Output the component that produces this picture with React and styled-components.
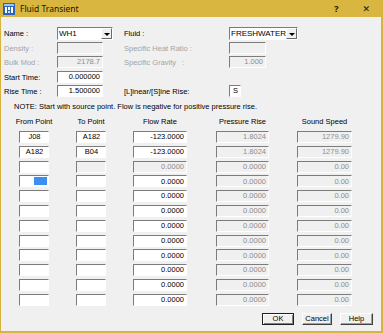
import React from "react";
import styled, { createGlobalStyle } from "styled-components";

const GlobalStyle = createGlobalStyle`
  html, body {
    margin: 0;
    padding: 0;
    background: #ffffff;
  }
  * {
    box-sizing: border-box;
  }
`;

const FONT = `"Liberation Sans", Arial, sans-serif`;

const rows = [
  { from: "J08", to: "A182", flow: "-123.0000", flowOn: true, pres: "1.8024", speed: "1279.90", fromOn: true, toOn: true },
  { from: "A182", to: "B04", flow: "-123.0000", flowOn: true, pres: "1.8024", speed: "1279.90", fromOn: true, toOn: true },
  { from: "", to: "", flow: "0.0000", flowOn: false, pres: "0.0000", speed: "0.00", fromOn: true, toOn: false },
  { from: "", to: "", flow: "0.0000", flowOn: true, pres: "0.0000", speed: "0.00", fromOn: true, toOn: true, caret: true },
];
for (let i = 0; i < 8; i++) {
  rows.push({ from: "", to: "", flow: "0.0000", flowOn: true, pres: "0.0000", speed: "0.00", fromOn: true, toOn: true });
}

function AppIcon() {
  return (
    <svg width="12" height="12" viewBox="0 0 12 12">
      <rect x="0" y="0" width="12" height="12" fill="#2a63b8" />
      <rect x="1" y="1" width="10" height="2" fill="#9cc3f0" />
      <rect x="2" y="4" width="2" height="6" fill="#ffffff" />
      <rect x="5" y="4" width="2" height="3" fill="#ffffff" />
      <rect x="8" y="4" width="2" height="6" fill="#ffffff" />
      <rect x="5" y="8" width="2" height="2" fill="#c8dcf5" />
    </svg>
  );
}

function Combo({ width, value }) {
  return (
    <ComboBox $w={width}>
      <ComboText>{value}</ComboText>
      <DropButton>
        <Arrow />
      </DropButton>
    </ComboBox>
  );
}

export default function App() {
  return (
    <>
      <GlobalStyle />
      <Window>
        <TitleBar>
          <TitleLeft>
            <AppIcon />
            <TitleText>Fluid Transient</TitleText>
          </TitleLeft>
          <TitleButtons>
            <TitleGlyph>?</TitleGlyph>
            <TitleGlyph $x>✕</TitleGlyph>
          </TitleButtons>
        </TitleBar>
        <Body>
          <Form>
            <Label>Name :</Label>
            <Cell>
              <Combo width={56} value="WH1" />
            </Cell>
            <Label>Fluid :</Label>
            <Cell>
              <Combo width={69} value="FRESHWATER" />
            </Cell>

            <Label $off>Density :</Label>
            <Cell>
              <Field $w={46} />
            </Cell>
            <Label $off>Specific Heat Ratio :</Label>
            <Cell>
              <Field $w={37} />
            </Cell>

            <Label $off>Bulk Mod :</Label>
            <Cell>
              <Field $w={46} $align="right">2178.7</Field>
            </Cell>
            <Label $off>Specific Gravity&nbsp;&nbsp;&nbsp;:</Label>
            <Cell>
              <Field $w={37} $align="right">1.000</Field>
            </Cell>

            <Label>Start Time:</Label>
            <Cell>
              <Field $w={46} $on $align="right">0.000000</Field>
            </Cell>
            <Label />
            <Cell />

            <Label>Rise Time :</Label>
            <Cell>
              <Field $w={46} $on $align="right">1.500000</Field>
            </Cell>
            <Label>[L]inear/[S]ine Rise:</Label>
            <Cell>
              <Field $w={12} $on $align="left">S</Field>
            </Cell>
          </Form>

          <Note>NOTE: Start with source point. Flow is negative for positive pressure rise.</Note>

          <Table>
            <Head $w={30}>From Point</Head>
            <Head $w={30}>To Point</Head>
            <Head $w={54}>Flow Rate</Head>
            <Head $w={53}>Pressure Rise</Head>
            <Head $w={55}>Sound Speed</Head>
            {rows.map((r, i) => (
              <React.Fragment key={i}>
                <Field $w={30} $on={r.fromOn} $align="center">
                  {r.from}
                  {r.caret && <Caret />}
                </Field>
                <Field $w={30} $on={r.toOn} $align="center">
                  {r.to}
                </Field>
                <Field $w={54} $on={r.flowOn} $align="right">
                  {r.flow}
                </Field>
                <Field $w={53} $align="right">
                  {r.pres}
                </Field>
                <Field $w={55} $align="right">
                  {r.speed}
                </Field>
              </React.Fragment>
            ))}
          </Table>

          <Buttons>
            <Button $w={32} $default>OK</Button>
            <Button $w={30}>Cancel</Button>
            <Button $w={33}>Help</Button>
          </Buttons>
        </Body>
      </Window>
    </>
  );
}

const Window = styled.div`
  width: 383px;
  height: 333px;
  border: 1px solid #d6b43e;
  border-width: 0 2px 2px 1px;
  background: #f0f0f0;
  display: flex;
  flex-direction: column;
  font-family: ${FONT};
  font-size: 7.5px;
  color: #000;
  overflow: hidden;
`;

const TitleBar = styled.div`
  height: 17px;
  flex: none;
  background: #d8b63f;
  display: flex;
  align-items: center;
  justify-content: space-between;
  padding: 0 0 0 2px;
`;

const TitleLeft = styled.div`
  display: flex;
  align-items: center;
  gap: 5px;
`;

const TitleText = styled.span`
  font-family: "Noto Sans", "Open Sans", sans-serif;
  font-size: 8.5px;
  color: #1a1400;
`;

const TitleButtons = styled.div`
  display: flex;
  align-items: center;
  gap: 24px;
  padding-right: 11px;
`;

const TitleGlyph = styled.span`
  font-family: "Noto Sans", "DejaVu Sans", sans-serif;
  font-size: ${(p) => (p.$x ? "9px" : "9px")};
  font-weight: ${(p) => (p.$x ? 400 : 700)};
  color: #1a1400;
`;

const Body = styled.div`
  flex: 1;
  display: flex;
  flex-direction: column;
  padding: 10px 0 0 3px;
`;

const Form = styled.div`
  display: grid;
  grid-template-columns: 53px 67px 105px auto;
  grid-auto-rows: 14.5px;
`;

const Label = styled.div`
  height: 13px;
  display: flex;
  align-items: center;
  white-space: nowrap;
  color: ${(p) => (p.$off ? "#a3a3a3" : "#000")};
`;

const Cell = styled.div`
  display: flex;
  align-items: flex-start;
`;

const Field = styled.div`
  position: relative;
  width: ${(p) => p.$w}px;
  height: 12px;
  border: 1px solid;
  border-color: #7c7c7c #ffffff #ffffff #7c7c7c;
  background: ${(p) => (p.$on ? "#ffffff" : "#f0f0f0")};
  color: ${(p) => (p.$on ? "#000" : "#8d8d8d")};
  display: flex;
  align-items: center;
  justify-content: ${(p) =>
    p.$align === "right" ? "flex-end" : p.$align === "center" ? "center" : "flex-start"};
  padding: 0 2px 0 3px;
  line-height: 1;
  white-space: nowrap;
  overflow: hidden;
`;

const Caret = styled.span`
  position: absolute;
  right: 1px;
  top: 1px;
  width: 13px;
  height: 8px;
  background: #3b8ff2;
`;

const ComboBox = styled.div`
  width: ${(p) => p.$w}px;
  height: 13px;
  border: 1px solid;
  border-color: #7c7c7c #ffffff #ffffff #7c7c7c;
  background: #ffffff;
  display: flex;
  align-items: stretch;
`;

const ComboText = styled.span`
  flex: 1;
  display: flex;
  align-items: center;
  padding-left: 1px;
  font-size: 8px;
  white-space: nowrap;
`;

const DropButton = styled.span`
  width: 11px;
  background: #f0f0f0;
  border: 1px solid;
  border-color: #ffffff #6a6a6a #6a6a6a #ffffff;
  display: flex;
  align-items: center;
  justify-content: center;
`;

const Arrow = styled.span`
  width: 0;
  height: 0;
  border-left: 3px solid transparent;
  border-right: 3px solid transparent;
  border-top: 3px solid #000;
  margin-top: 1px;
`;

const Note = styled.div`
  margin: 2px 0 0 10px;
  line-height: 9px;
  white-space: nowrap;
`;

const Table = styled.div`
  margin: 6px 0 0 15px;
  display: grid;
  grid-template-columns: 57px 57px 83px 81px 56px;
  grid-template-rows: 10.7px;
  grid-auto-rows: 11px;
  row-gap: 3.8px;
  align-items: start;
`;

const Head = styled.div`
  width: ${(p) => p.$w}px;
  line-height: 9px;
  text-align: center;
  white-space: nowrap;
  display: flex;
  justify-content: center;
`;

const Buttons = styled.div`
  display: flex;
  justify-content: flex-end;
  gap: 8px;
  margin-top: 8px;
  padding-right: 8px;
`;

const Button = styled.div`
  width: ${(p) => p.$w}px;
  height: 12px;
  background: #f0f0f0;
  border: 1px solid;
  border-color: ${(p) =>
    p.$default ? "#202020" : "#ffffff #404040 #404040 #ffffff"};
  box-shadow: ${(p) =>
    p.$default
      ? "inset 1px 1px 0 #ffffff, inset -1px -1px 0 #808080"
      : "inset -1px -1px 0 #a0a0a0"};
  display: flex;
  align-items: center;
  justify-content: center;
  line-height: 1;
`;
